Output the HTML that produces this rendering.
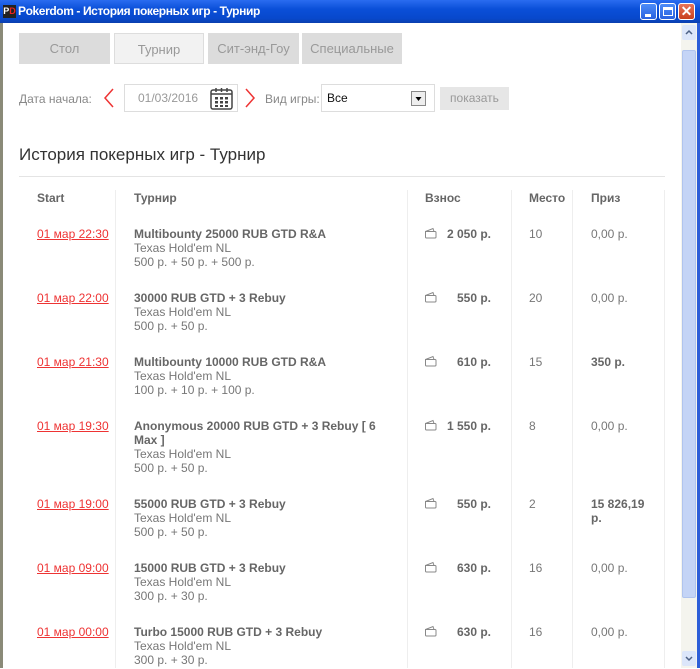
<!DOCTYPE html>
<html><head><meta charset="utf-8"><style>
*{margin:0;padding:0;box-sizing:border-box}
body{width:700px;height:668px;overflow:hidden;background:#fff;font-family:"Liberation Sans",Arial,sans-serif;font-size:12px;color:#777;position:relative}
.abs{position:absolute}
.title{left:0;top:0;width:700px;height:23px;background:linear-gradient(#2a6cf0,#0a4fd8 40%,#0848cc 80%,#0a3fae);color:#fff;font-size:12px;font-weight:bold;line-height:23px;padding-left:18px;letter-spacing:-0.4px;font-family:"Liberation Sans",sans-serif}
.logo{left:3px;top:5px;width:13px;height:13px;background:#222;color:#fff;font-size:9px;line-height:13px;text-align:center;font-weight:bold}
.logo b{color:#e22}
.wb{top:3px;width:17px;height:17px;border:1px solid #fff;border-radius:3px;background:linear-gradient(#4d8cf8,#2a62e0)}
.lf{left:0;top:23px;width:3px;height:645px;background:#8a8a78}
.rf{left:697px;top:23px;width:3px;height:645px;background:#2d5ed8}
.sb{left:681px;top:23px;width:16px;height:645px;background:#f4f4ee}
.tab{top:33px;height:31px;line-height:31px;text-align:center;background:#dcdcdc;color:#999;font-size:13px}
.lbl{font-size:12px;color:#888}
.hdr{font-weight:bold;color:#666;top:191px}
.vl{top:190px;width:1px;height:478px;background:#eee}
.t{color:#777;line-height:14px}
.t b{color:#666}
.dt{color:#e33;text-decoration:underline;left:37px}
.fee{font-weight:bold;color:#666;text-align:right;width:60px;left:431px}
.ic{left:424px;width:13px;height:12px}
</style></head><body>
<div class="abs title">Pokerdom - История покерных игр - Турнир</div>
<div class="abs logo">P<b>D</b></div>
<div class="abs wb" style="left:640px"><div class="abs" style="left:4px;top:10px;width:6px;height:3px;background:#fff"></div></div>
<div class="abs wb" style="left:659px"><div class="abs" style="left:3px;top:3px;width:10px;height:9px;border:1px solid #fff;border-top-width:3px"></div></div>
<div class="abs wb" style="left:678px;background:linear-gradient(#e8755a,#c8401e);color:#fff;font-size:14px;text-align:center;line-height:15px;font-weight:bold">✕</div>
<div class="abs lf"></div>
<div class="abs sb">
 <div class="abs" style="left:1px;top:2px;width:14px;height:15px;background:#dce6fa;border-radius:2px"><svg width="14" height="15"><path d="M4 9 L7 6 L10 9" stroke="#4d6185" stroke-width="1.5" fill="none"/></svg></div>
 <div class="abs" style="left:1px;top:27px;width:14px;height:548px;background:#c4d4f6;border-radius:2px;border:1px solid #b0c4ee"></div>
 <div class="abs" style="left:1px;top:628px;width:14px;height:15px;background:#dce6fa;border-radius:2px"><svg width="14" height="15"><path d="M4 6 L7 9 L10 6" stroke="#4d6185" stroke-width="1.5" fill="none"/></svg></div>
</div>
<div class="abs rf"></div>

<div class="abs tab" style="left:19px;width:91px">Стол</div>
<div class="abs tab" style="left:114px;width:90px;background:#f2f2f2;border:1px solid #ddd">Турнир</div>
<div class="abs tab" style="left:208px;width:91px">Сит-энд-Гоу</div>
<div class="abs tab" style="left:302px;width:100px">Специальные</div>

<div class="abs lbl" style="left:19px;top:92px">Дата начала:</div>
<svg class="abs" style="left:102px;top:88px" width="14" height="20"><path d="M11 1 L3 10 L11 19" stroke="#e33" stroke-width="1.5" fill="none"/></svg>
<div class="abs" style="left:124px;top:84px;width:114px;height:28px;border:1px solid #ddd;color:#999;line-height:26px;padding-left:13px">01/03/2016</div>
<svg class="abs" style="left:210px;top:87px" width="23" height="23"><rect x="1" y="3" width="21" height="19" rx="2" fill="none" stroke="#444" stroke-width="1.5"/><line x1="1" y1="7" x2="22" y2="7" stroke="#444" stroke-width="1.5"/><path d="M6 1v4M11.5 1v4M17 1v4" stroke="#444" stroke-width="1.5"/><g fill="#444"><rect x="5" y="10" width="3" height="2.5"/><rect x="10" y="10" width="3" height="2.5"/><rect x="15" y="10" width="3" height="2.5"/><rect x="5" y="14" width="3" height="2.5"/><rect x="10" y="14" width="3" height="2.5"/><rect x="15" y="14" width="3" height="2.5"/><rect x="5" y="18" width="3" height="2"/><rect x="10" y="18" width="3" height="2"/><rect x="15" y="18" width="3" height="2"/></g></svg>
<svg class="abs" style="left:243px;top:88px" width="14" height="20"><path d="M3 1 L11 10 L3 19" stroke="#e33" stroke-width="1.5" fill="none"/></svg>
<div class="abs lbl" style="left:265px;top:92px">Вид игры:</div>
<div class="abs" style="left:321px;top:84px;width:114px;height:28px;border:1px solid #ddd;color:#111;line-height:26px;padding-left:5px;font-size:12px">Все</div>
<div class="abs" style="left:411px;top:91px;width:15px;height:15px;border:1px solid #888;background:#eee"><svg width="13" height="13"><path d="M3.5 5 L9.5 5 L6.5 9 Z" fill="#000"/></svg></div>
<div class="abs" style="left:440px;top:87px;width:69px;height:23px;background:#e6e6e6;color:#999;line-height:23px;text-align:center">показать</div>

<div class="abs" style="left:19px;top:145px;font-size:17px;color:#333">История покерных игр - Турнир</div>
<div class="abs" style="left:19px;top:176px;width:646px;height:1px;background:#e4e4e4"></div>

<div class="abs vl" style="left:115px"></div>
<div class="abs vl" style="left:407px"></div>
<div class="abs vl" style="left:511px"></div>
<div class="abs vl" style="left:572px"></div>
<div class="abs vl" style="left:664px"></div>

<div class="abs hdr" style="left:37px">Start</div>
<div class="abs hdr" style="left:134px">Турнир</div>
<div class="abs hdr" style="left:425px">Взнос</div>
<div class="abs hdr" style="left:529px">Место</div>
<div class="abs hdr" style="left:591px">Приз</div>

<svg width="0" height="0" style="position:absolute"><defs></defs></svg>

<div class="abs t dt" style="top:227px">01 мар 22:30</div>
<div class="abs t" style="left:134px;top:227px;width:260px"><b>Multibounty 25000 RUB GTD R&amp;A</b><br>Texas Hold'em NL<br>500 р. + 50 р. + 500 р.</div>
<svg class="abs ic" style="top:227px" width="13" height="12"><path d="M1.5 4.5 L9 1.5 L10 4.5 M1.5 4.5 H11 a1 1 0 0 1 1 1 V10 a1 1 0 0 1 -1 1 H2.5 a1 1 0 0 1 -1 -1 Z" fill="none" stroke="#888"/></svg><div class="abs t fee" style="top:227px">2 050 р.</div>
<div class="abs t" style="left:529px;top:227px">10</div><div class="abs t" style="left:591px;top:227px">0,00 р.</div>

<div class="abs t dt" style="top:291px">01 мар 22:00</div>
<div class="abs t" style="left:134px;top:291px;width:260px"><b>30000 RUB GTD + 3 Rebuy</b><br>Texas Hold'em NL<br>500 р. + 50 р.</div>
<svg class="abs ic" style="top:291px" width="13" height="12"><path d="M1.5 4.5 L9 1.5 L10 4.5 M1.5 4.5 H11 a1 1 0 0 1 1 1 V10 a1 1 0 0 1 -1 1 H2.5 a1 1 0 0 1 -1 -1 Z" fill="none" stroke="#888"/></svg><div class="abs t fee" style="top:291px">550 р.</div>
<div class="abs t" style="left:529px;top:291px">20</div><div class="abs t" style="left:591px;top:291px">0,00 р.</div>

<div class="abs t dt" style="top:355px">01 мар 21:30</div>
<div class="abs t" style="left:134px;top:355px;width:260px"><b>Multibounty 10000 RUB GTD R&amp;A</b><br>Texas Hold'em NL<br>100 р. + 10 р. + 100 р.</div>
<svg class="abs ic" style="top:355px" width="13" height="12"><path d="M1.5 4.5 L9 1.5 L10 4.5 M1.5 4.5 H11 a1 1 0 0 1 1 1 V10 a1 1 0 0 1 -1 1 H2.5 a1 1 0 0 1 -1 -1 Z" fill="none" stroke="#888"/></svg><div class="abs t fee" style="top:355px">610 р.</div>
<div class="abs t" style="left:529px;top:355px">15</div><div class="abs t" style="left:591px;top:355px"><b>350 р.</b></div>

<div class="abs t dt" style="top:419px">01 мар 19:30</div>
<div class="abs t" style="left:134px;top:419px;width:256px"><b>Anonymous 20000 RUB GTD + 3 Rebuy [ 6 Max ]</b><br>Texas Hold'em NL<br>500 р. + 50 р.</div>
<svg class="abs ic" style="top:419px" width="13" height="12"><path d="M1.5 4.5 L9 1.5 L10 4.5 M1.5 4.5 H11 a1 1 0 0 1 1 1 V10 a1 1 0 0 1 -1 1 H2.5 a1 1 0 0 1 -1 -1 Z" fill="none" stroke="#888"/></svg><div class="abs t fee" style="top:419px">1 550 р.</div>
<div class="abs t" style="left:529px;top:419px">8</div><div class="abs t" style="left:591px;top:419px">0,00 р.</div>

<div class="abs t dt" style="top:497px">01 мар 19:00</div>
<div class="abs t" style="left:134px;top:497px;width:260px"><b>55000 RUB GTD + 3 Rebuy</b><br>Texas Hold'em NL<br>500 р. + 50 р.</div>
<svg class="abs ic" style="top:497px" width="13" height="12"><path d="M1.5 4.5 L9 1.5 L10 4.5 M1.5 4.5 H11 a1 1 0 0 1 1 1 V10 a1 1 0 0 1 -1 1 H2.5 a1 1 0 0 1 -1 -1 Z" fill="none" stroke="#888"/></svg><div class="abs t fee" style="top:497px">550 р.</div>
<div class="abs t" style="left:529px;top:497px">2</div><div class="abs t" style="left:591px;top:497px;width:62px"><b>15 826,19 р.</b></div>

<div class="abs t dt" style="top:561px">01 мар 09:00</div>
<div class="abs t" style="left:134px;top:561px;width:260px"><b>15000 RUB GTD + 3 Rebuy</b><br>Texas Hold'em NL<br>300 р. + 30 р.</div>
<svg class="abs ic" style="top:561px" width="13" height="12"><path d="M1.5 4.5 L9 1.5 L10 4.5 M1.5 4.5 H11 a1 1 0 0 1 1 1 V10 a1 1 0 0 1 -1 1 H2.5 a1 1 0 0 1 -1 -1 Z" fill="none" stroke="#888"/></svg><div class="abs t fee" style="top:561px">630 р.</div>
<div class="abs t" style="left:529px;top:561px">16</div><div class="abs t" style="left:591px;top:561px">0,00 р.</div>

<div class="abs t dt" style="top:625px">01 мар 00:00</div>
<div class="abs t" style="left:134px;top:625px;width:260px"><b>Turbo 15000 RUB GTD + 3 Rebuy</b><br>Texas Hold'em NL<br>300 р. + 30 р.</div>
<svg class="abs ic" style="top:625px" width="13" height="12"><path d="M1.5 4.5 L9 1.5 L10 4.5 M1.5 4.5 H11 a1 1 0 0 1 1 1 V10 a1 1 0 0 1 -1 1 H2.5 a1 1 0 0 1 -1 -1 Z" fill="none" stroke="#888"/></svg><div class="abs t fee" style="top:625px">630 р.</div>
<div class="abs t" style="left:529px;top:625px">16</div><div class="abs t" style="left:591px;top:625px">0,00 р.</div>
</body></html>
